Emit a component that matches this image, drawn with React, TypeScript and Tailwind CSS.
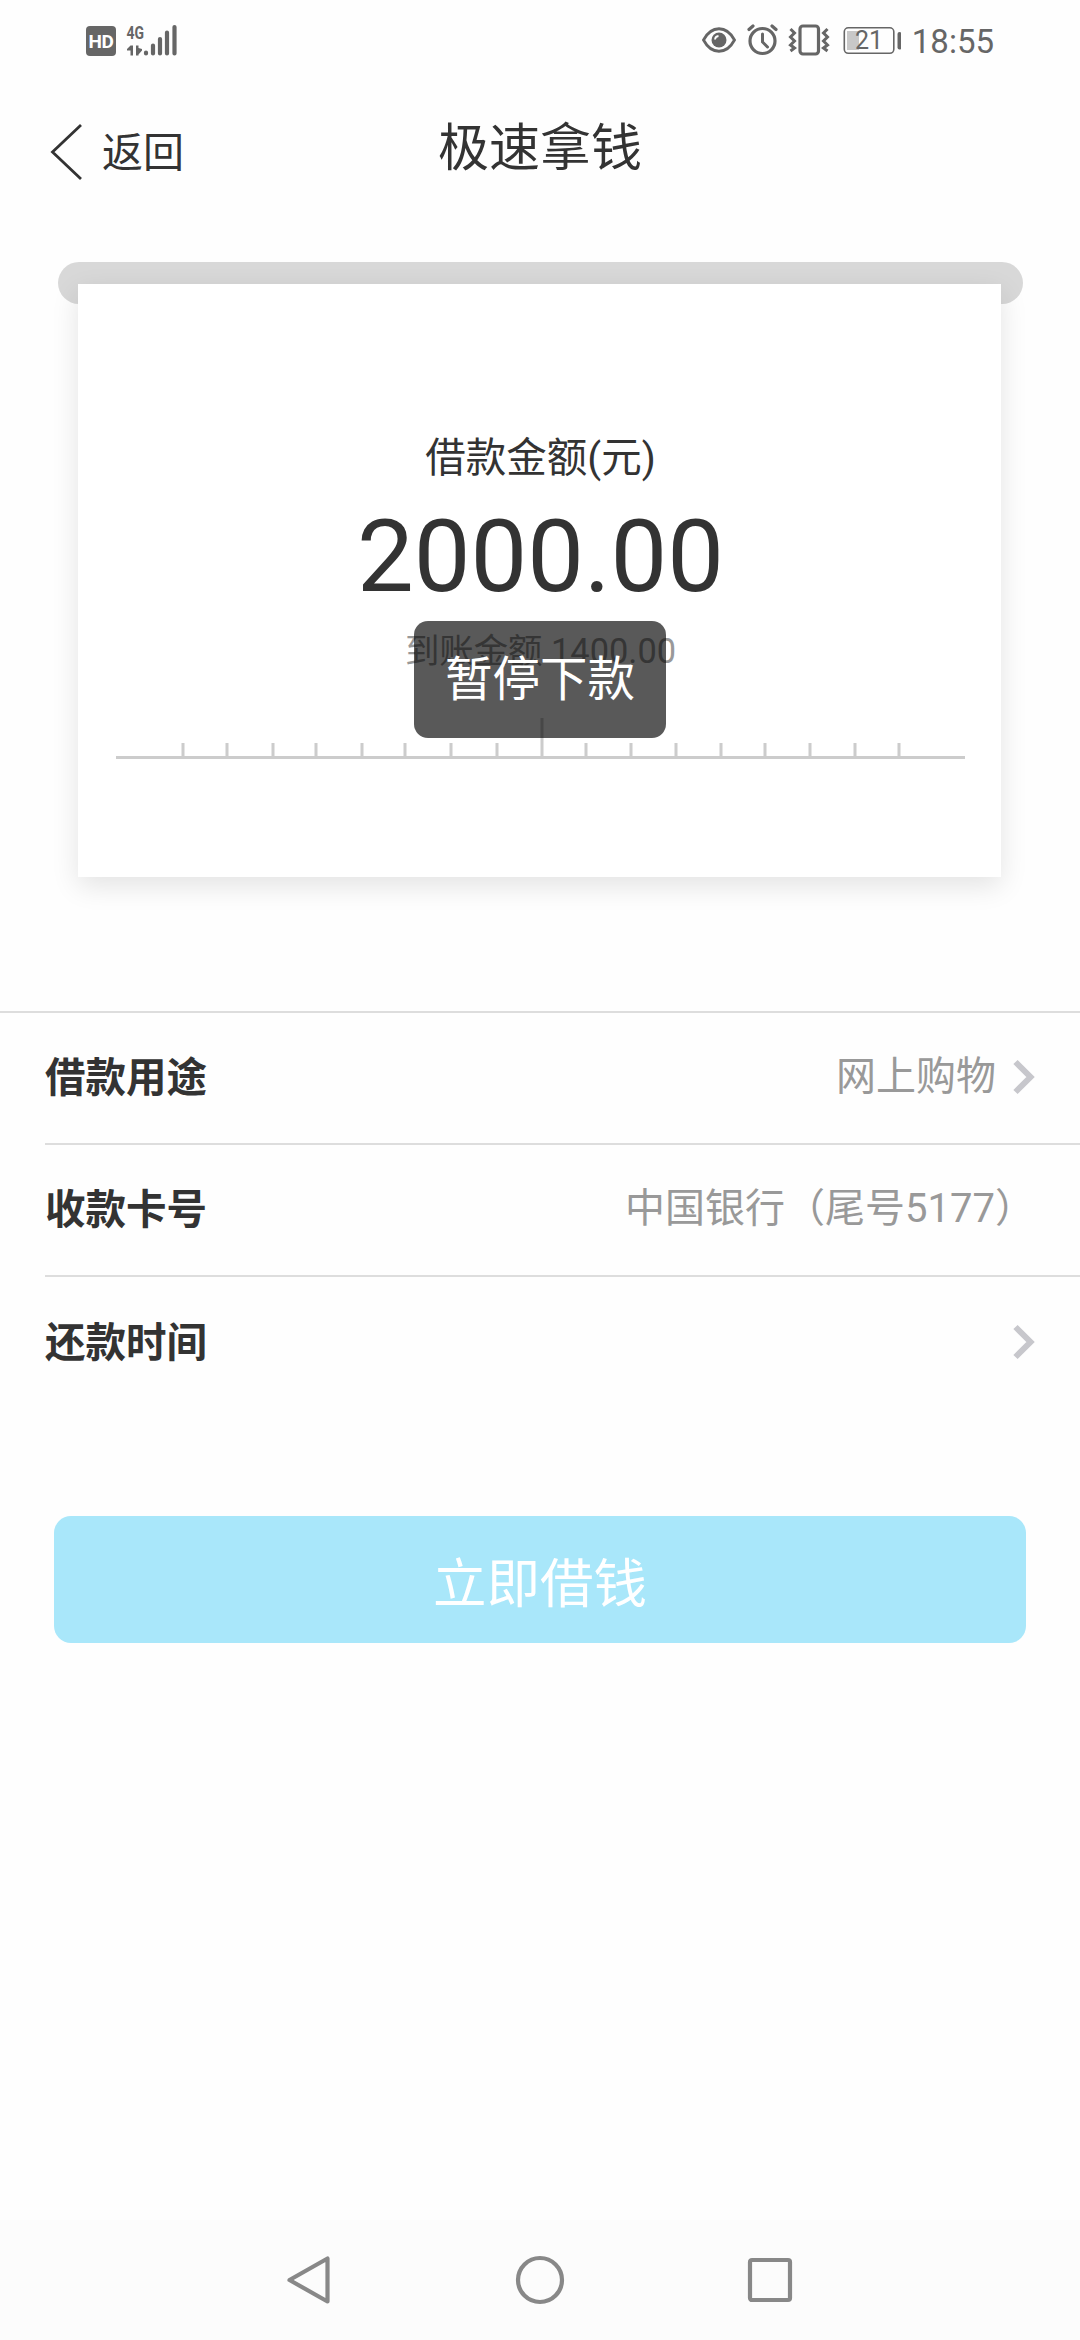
import React from "react";

const TICKS = [181, 225, 271, 314, 360, 403, 449, 495, 540, 584, 629, 674, 719, 763, 808, 853, 897];

function StatusBar() {
  return (
    <div className="flex h-20 w-full items-center justify-between pt-[2px] pl-[86px] pr-[86px] text-[#666]">
      <div className="flex items-center gap-[10px]">
        <div className="flex h-[30px] w-[30px] items-center justify-center rounded-[4px] bg-[#666] text-[19px] font-bold leading-none tracking-[-0.5px] text-white">
          HD
        </div>
        <svg className="overflow-visible" width="52" height="40" viewBox="126 20.500 52 40" fill="none" stroke="#666">
          <text x="126.5" y="38" fontSize="18.5" fontWeight="700" textLength="17.5" lengthAdjust="spacingAndGlyphs" fill="#666" stroke="none">4G</text>
          <path d="M130.500 45h2.500v10h-2.500v-5h-3.500v-1.500zM136 45h2.500v2.500l3.500 1v1.500l-3.500 4v1h-2.500z" fill="#666" stroke="none" />
          <path d="M146 52v1M153 45v8M160 38.5v14.500M167 32v21M174.500 26.500v26.500" strokeWidth="4.200" strokeLinecap="round" />
        </svg>
      </div>
      <div className="flex items-center">
        <svg width="200" height="34" viewBox="700.500 24 200 34" fill="none" stroke="#666">
          <path d="M703 40C711 25 726 25 734 40C726 55 711 55 703 40Z" strokeWidth="2.800" />
          <circle cx="718.500" cy="40" r="7.500" fill="#666" stroke="none" />
          <path d="M714.500 39.500a4 4 0 0 1 3.500-3.500" stroke="#fff" strokeWidth="1.800" />
          <circle cx="762" cy="41" r="12.500" strokeWidth="3.200" />
          <path d="M762 34v8l5 5" strokeWidth="3" strokeLinecap="round" />
          <path d="M748.500 29.500l4-3.500M775.500 29.500l-4-3.500" strokeWidth="3.200" strokeLinecap="round" />
          <rect x="799.500" y="26" width="18.500" height="28" rx="3" strokeWidth="3.200" />
          <path d="M790 29l4 4-4 4 4 4-4 4 4 3-4 3M827 29l-4 4 4 4-4 4 4 4-4 3 4 3" strokeWidth="3" />
          <rect x="843.800" y="27.800" width="49.500" height="25.500" rx="4" strokeWidth="1.600" />
          <rect x="846.500" y="31" width="12" height="19" fill="#c8c8c8" stroke="none" />
          <path d="M899 34v13.500" strokeWidth="4" strokeLinecap="round" />
          <text x="868.500" y="49" fontSize="25" textAnchor="middle" fill="#666" stroke="none">21</text>
        </svg>
        <span className="ml-[11px] text-[33px] leading-none">18:55</span>
      </div>
    </div>
  );
}

function Header() {
  return (
    <header className="grid h-[140px] grid-cols-[1fr_auto_1fr] items-center pb-[4px] text-[#333]">
      <div className="flex items-center pl-[50px] pt-[10px] text-[41px] leading-none">
        <svg className="-translate-y-[1.5px]" width="32" height="58" viewBox="50 122 32 58" fill="none" stroke="#333" strokeWidth="2.800">
          <path d="M81 124.500L52.500 151.500L81 178.500" />
        </svg>
        <span className="pl-5">返回</span>
      </div>
      <h1 className="text-[51px] leading-none">极速拿钱</h1>
    </header>
  );
}

function Ruler() {
  return (
    <svg className="mt-[47px]" width="849" height="41" viewBox="115.500 718 849 41">
      <rect x="115.500" y="756" width="849" height="3" fill="#ccc" />
      {TICKS.map((x, i) => (
        <rect key={x} x={x} y={i === 8 ? 718 : 743} width="3" height={i === 8 ? 38 : 13} fill="#ccc" />
      ))}
    </svg>
  );
}

function AmountCard() {
  return (
    <section className="relative mt-[42px] px-[58px] pr-[57px]">
      <div className="h-[42px] rounded-full bg-[#d8d8d8]" />
      <div className="relative mr-[22px] ml-[20px] mt-[-20px] flex h-[593px] flex-col items-center bg-white pl-[2px] pt-[150px] text-[#333] shadow-[0_9px_26px_rgba(0,0,0,0.11)]">
        <div className="text-[40.5px] leading-[48px]">借款金额(元)</div>
        <div className="mt-[15px] text-[101px] leading-[120px]">2000.00</div>
        <div className="mt-[14px] text-[34.4px] leading-[40px] text-[#999]">到账金额 1400.00</div>
        <Ruler />
      </div>
      <div className="absolute left-[414px] top-[359px] flex h-[117px] w-[252px] items-center justify-center rounded-[14px] bg-black/65 pt-[3px] text-[47.5px] leading-none text-white">
        暂停下款
      </div>
    </section>
  );
}

function Chevron() {
  return (
    <svg className="ml-[17px]" width="22" height="36" viewBox="1012 1059 22 36" fill="none" stroke="#c7c7cc" strokeWidth="6">
      <path d="M1014.500 1062L1029.500 1077L1014.500 1092" />
    </svg>
  );
}

function Row({ label, value, arrow, line }: { label: string; value?: string; arrow?: boolean; line?: boolean }) {
  return (
    <div className="pl-[45px]">
      <div className={line ? "flex h-[132px] items-center justify-between border-b-2 border-[#ddd] pr-[45px]" : "flex h-[132px] items-center justify-between pr-[45px]"}>
        <span className="text-[40.5px] font-bold leading-none text-[#333]">{label}</span>
        <span className="flex items-center pb-[3px] text-[40px] leading-none text-[#999]">
          {value}
          {arrow && <Chevron />}
        </span>
      </div>
    </div>
  );
}

function NavBar() {
  return (
    <nav className="mt-auto flex h-[120px] items-center justify-between bg-[#fcfcfc] pl-[286px] pr-[287px]">
      <svg width="46" height="50" viewBox="0 0 46 50" fill="none" stroke="#888" strokeWidth="4.200" strokeLinejoin="round">
        <path d="M41.500 3.500V46.500L3.500 25Z" />
      </svg>
      <svg width="50" height="50" viewBox="0 0 50 50" fill="none" stroke="#888" strokeWidth="4.200">
        <circle cx="25" cy="25" r="22" />
      </svg>
      <svg width="46" height="46" viewBox="0 0 46 46" fill="none" stroke="#888" strokeWidth="4.200">
        <rect x="3" y="3" width="40" height="40" rx="2" />
      </svg>
    </nav>
  );
}

export default function App() {
  return (
    <div className="flex h-[2340px] w-[1080px] flex-col overflow-hidden bg-[#fefefe] font-[Roboto,'Noto_Sans_CJK_SC',sans-serif]">
      <StatusBar />
      <Header />
      <AmountCard />
      <div className="mt-[134px] border-t-2 border-[#ddd]">
        <Row label="借款用途" value="网上购物" arrow line />
        <Row label="收款卡号" value="中国银行（尾号5177）" line />
        <Row label="还款时间" arrow />
      </div>
      <button className="mx-[54px] mt-[107px] flex h-[127px] items-center justify-center rounded-[17px] bg-[#a9e7fa] pt-[11px] text-[53.5px] leading-none text-white">
        立即借钱
      </button>
      <NavBar />
    </div>
  );
}
